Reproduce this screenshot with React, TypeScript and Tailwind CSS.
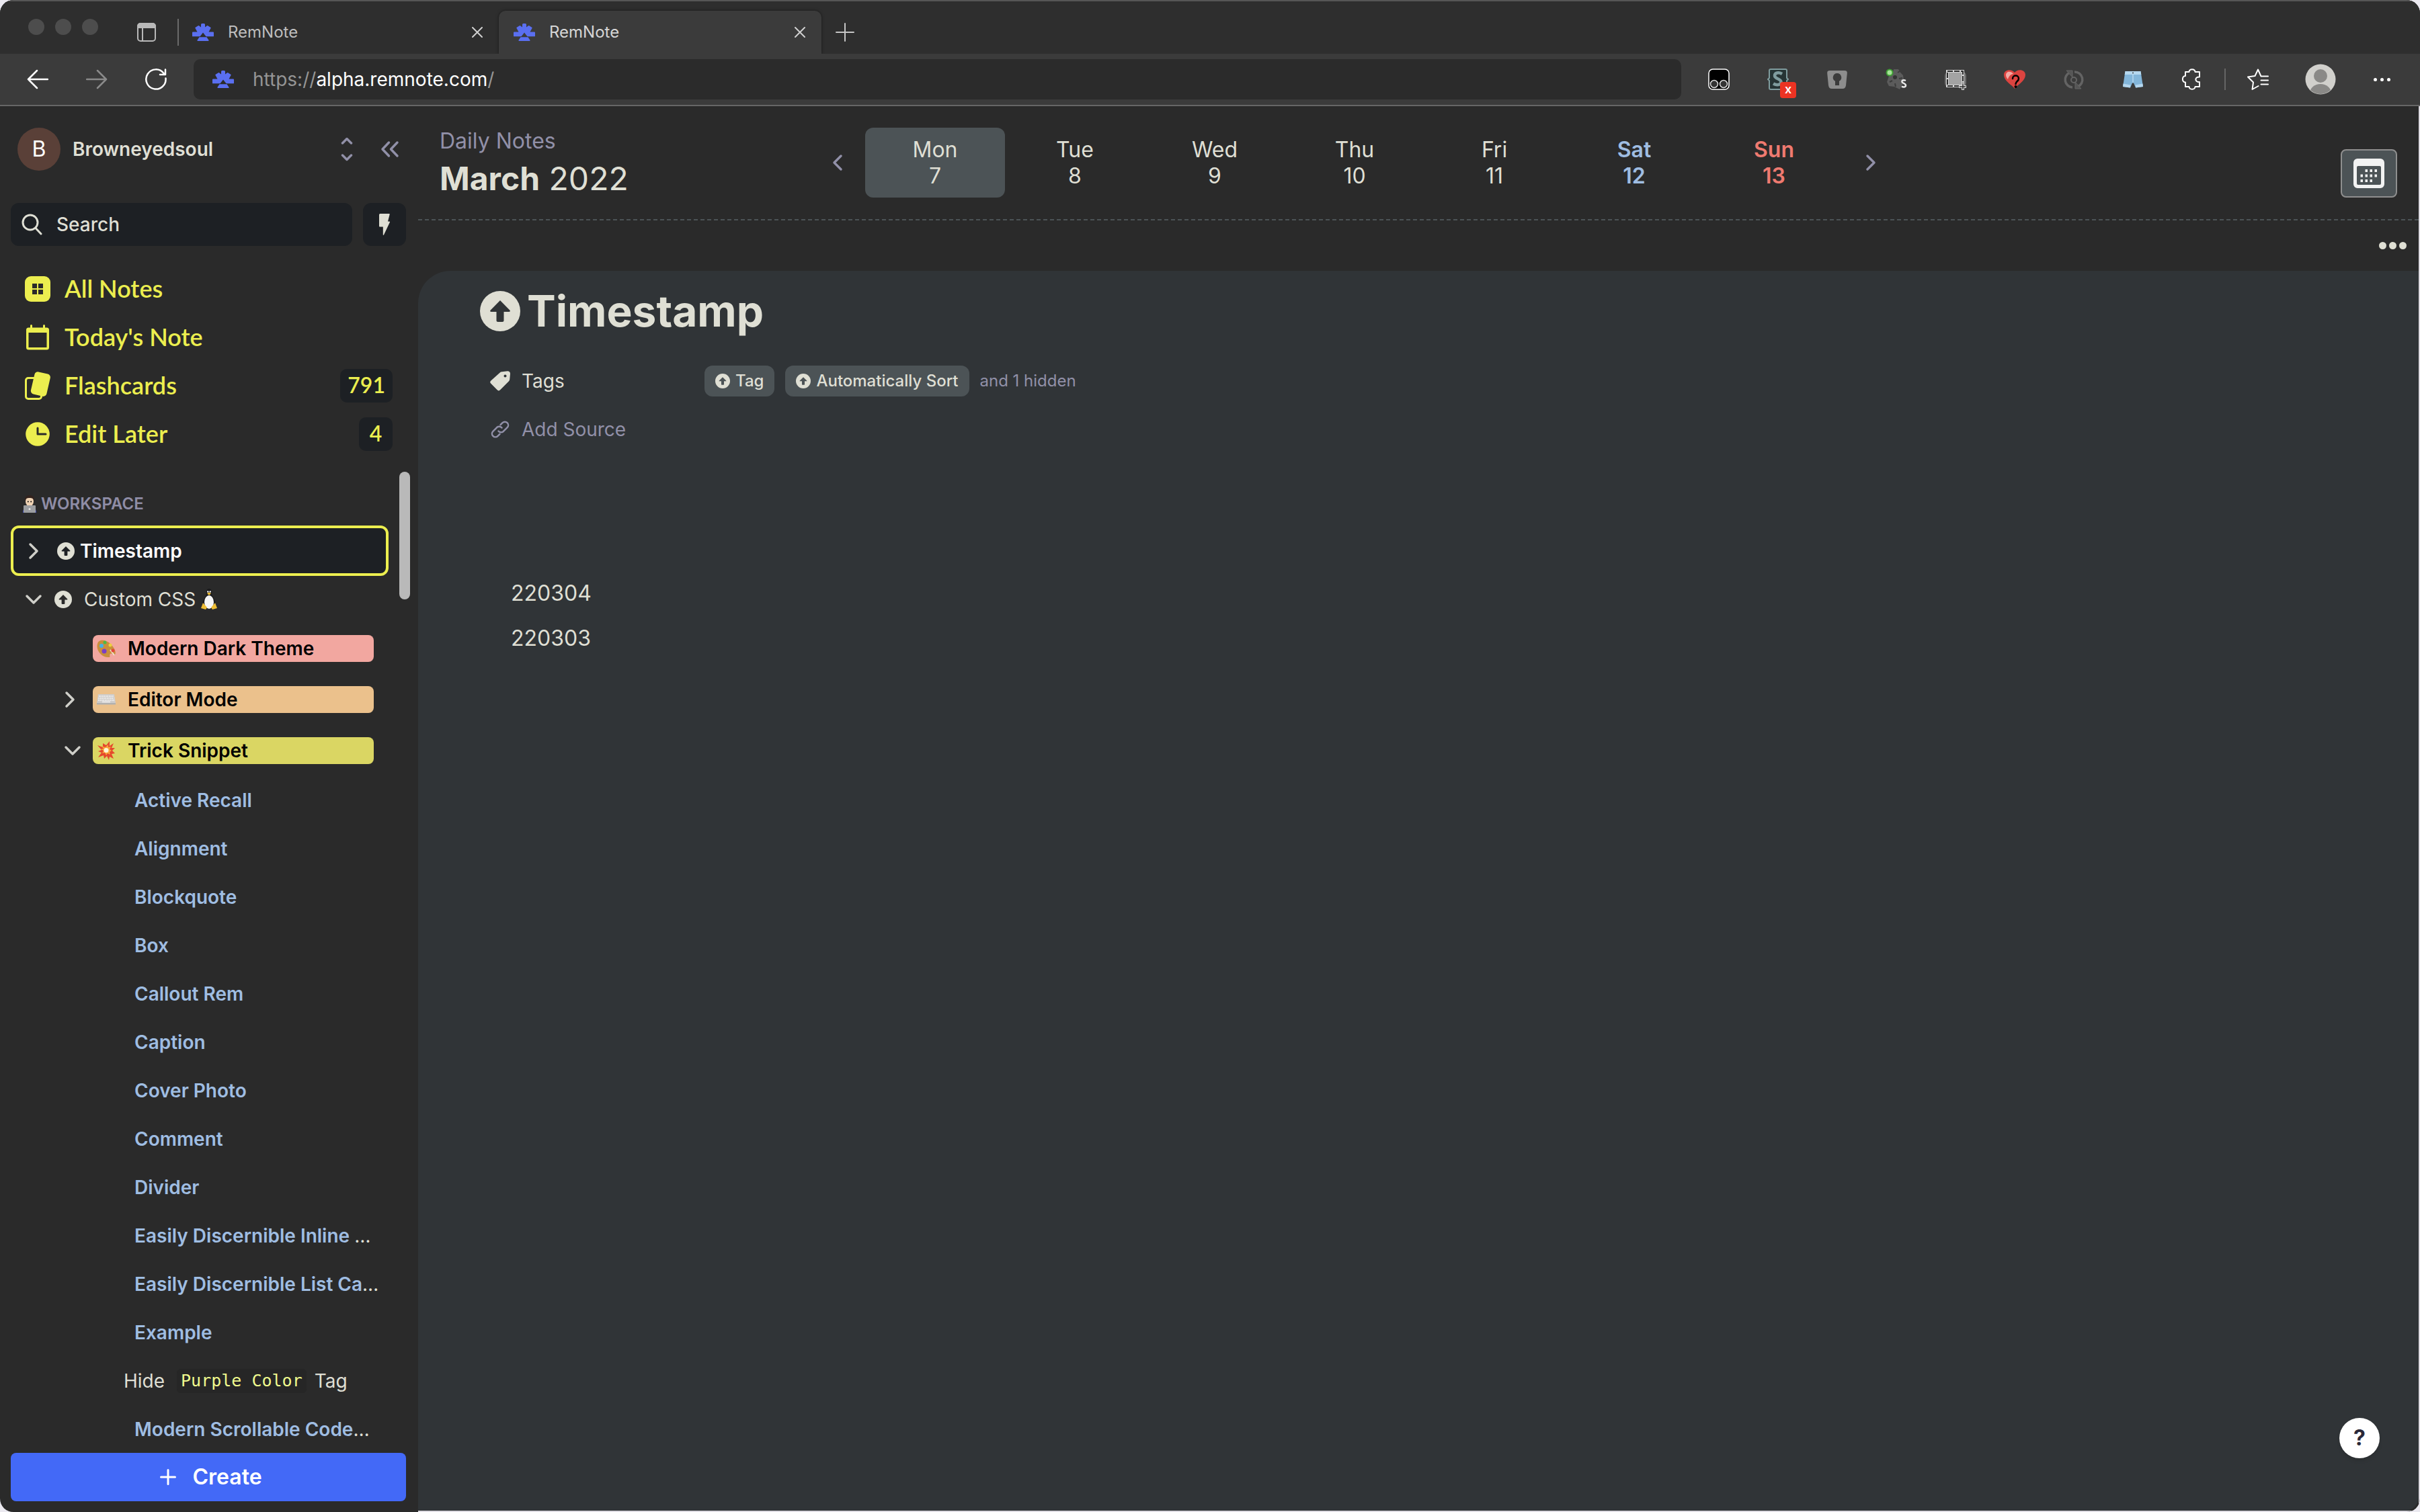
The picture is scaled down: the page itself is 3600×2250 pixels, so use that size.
import React from "react";

type IconProps = { className?: string };

function RemLogo({ className = "" }: IconProps) {
  return (
    <svg viewBox="0 0 32 26" className={`h-[26px] w-8 shrink-0 fill-[#5a6ff0] ${className}`} aria-hidden="true">
      <path d="M14.500 0h3a1.500 1.500 0 0 1 1.500 1.500V5.500l3-2.300a1 1 0 0 1 1.200 0l4 2.600a1 1 0 0 1 .3 1.200L24.500 12.500H31a1 1 0 0 1 1 1V18a1 1 0 0 1-1 1.200H20.500L16 13.500l-4.500 5.700H1A1 1 0 0 1 0 18v-4.500a1 1 0 0 1 1-1h6.500L4.500 7a1 1 0 0 1 .3-1.200l4-2.600a1 1 0 0 1 1.200 0l3 2.300V1.500A1.500 1.500 0 0 1 14.500 0z" />
      <path d="M10.500 20.200h11l3 4.600a.8.8 0 0 1-.7 1.200H8.200a.8.8 0 0 1-.7-1.200z" />
    </svg>
  );
}

function UpCircle({ className = "", arrow = "fill-[#2a2a2a]" }: IconProps & { arrow?: string }) {
  return (
    <svg viewBox="0 0 24 24" className={`shrink-0 ${className}`} aria-hidden="true">
      <circle cx="12" cy="12" r="12" className="fill-[#dfdfd4]" />
      <path
        d="M12 5.600 6.300 11.400c-.5.6-.2 1 .4 1h3.100v5.100c0 .6.300.9.9.9h2.600c.6 0 .9-.3.9-.9v-5.100h3.100c.6 0 .9-.4.4-1z"
        className={arrow}
      />
    </svg>
  );
}

function Chevron({ dir, className = "" }: IconProps & { dir: "left" | "right" | "down" }) {
  const d = { left: "M20 4 10 14l10 10", right: "M11 4l10 10-10 10", down: "M4 9l10 10L24 9" }[dir];
  return (
    <svg viewBox="0 0 28 28" className={`h-7 w-7 shrink-0 fill-none ${className}`} strokeWidth="3.500" strokeLinecap="round" strokeLinejoin="round" aria-hidden="true">
      <path d={d} />
    </svg>
  );
}

function CloseIcon() {
  return (
    <svg viewBox="0 0 16 16" className="h-4 w-4 stroke-[#d0d0d0]" strokeWidth="2" strokeLinecap="round" aria-hidden="true">
      <path d="M1 1l14 14M15 1 1 15" />
    </svg>
  );
}

function BrowserTab({ active = false }: { active?: boolean }) {
  return (
    <div
      className={
        active
          ? "flex h-16 w-[480px] items-center rounded-t-[10px] bg-[#3b3b3b] pr-6 pl-[22px] text-[#d6d6d6] shadow-[0_0_4px_rgba(0,0,0,0.5)]"
          : "flex h-16 w-[476px] items-center pr-6 pl-5 text-[#bdbdbd]"
      }
    >
      <button role="tab" aria-selected={active} className="flex flex-1 items-center gap-[21px] text-left text-[24px] leading-8">
        <RemLogo />
        RemNote
      </button>
      <button aria-label="Close tab">
        <CloseIcon />
      </button>
    </div>
  );
}

function TabStrip() {
  return (
    <div className="flex h-20 items-end border-t-2 border-[#565656] bg-[#2e2e2e]">
      <div className="flex h-16 items-center">
        <div className="flex gap-4 pb-4 pl-[42px]">
          <button aria-label="Close window" className="h-6 w-6 rounded-full bg-[#4d4d4d]" />
          <button aria-label="Minimize window" className="h-6 w-6 rounded-full bg-[#4d4d4d]" />
          <button aria-label="Zoom window" className="h-6 w-6 rounded-full bg-[#4d4d4d]" />
        </div>
        <button aria-label="Tab actions" className="ml-[58px]">
          <svg viewBox="0 0 28 28" className="h-7 w-7" aria-hidden="true">
            <rect x="1" y="1" width="26" height="26" rx="4" className="fill-none stroke-[#b9b9b9]" strokeWidth="2" />
            <path d="M0 5a5 5 0 0 1 5-5h18a5 5 0 0 1 5 5v3H0z" className="fill-[#b9b9b9]" />
            <path d="M8 8v19" className="stroke-[#b9b9b9]" strokeWidth="2" />
          </svg>
        </button>
        <div className="ml-8 h-10 w-[2px] bg-[#6a6a6a]" />
      </div>
      <div role="tablist" className="flex">
        <BrowserTab />
        <BrowserTab active />
      </div>
      <button aria-label="New tab" className="flex h-16 items-center pl-[21px]">
        <svg viewBox="0 0 28 28" className="h-7 w-7 stroke-[#c6c6c6]" strokeWidth="2" strokeLinecap="round" aria-hidden="true">
          <path d="M14 1v26M1 14h26" />
        </svg>
      </button>
    </div>
  );
}

function ExtensionButton({ label, children }: { label: string; children: React.ReactNode }) {
  return (
    <button aria-label={label} className="relative flex h-8 w-8 items-center justify-center">
      {children}
    </button>
  );
}

function Toolbar() {
  return (
    <div className="flex h-[78px] items-center border-b-2 border-[#666] bg-[#3b3b3b]">
      <div className="flex items-center gap-14 pl-10">
        <button aria-label="Back">
          <svg viewBox="0 0 32 32" className="h-8 w-8 fill-none stroke-white" strokeWidth="2.500" strokeLinecap="round" strokeLinejoin="round">
            <path d="M31 16H2M15 3 2 16l13 13" />
          </svg>
        </button>
        <button aria-label="Forward">
          <svg viewBox="0 0 32 32" className="h-8 w-8 fill-none stroke-[#8a8a8a]" strokeWidth="2.500" strokeLinecap="round" strokeLinejoin="round">
            <path d="M1 16h29M17 3l13 13-13 13" />
          </svg>
        </button>
        <button aria-label="Reload">
          <svg viewBox="0 0 32 32" className="h-8 w-8 fill-none stroke-white" strokeWidth="2.500" strokeLinecap="round" strokeLinejoin="round">
            <path d="M30.500 14.500A14.600 14.600 0 1 1 27.500 7M30 1.500V9h-8" />
          </svg>
        </button>
      </div>
      <div className="ml-10 flex h-[60px] flex-1 items-center gap-7 rounded-[10px] bg-[#2b2b2b] pl-7">
        <RemLogo />
        <div role="textbox" aria-label="Address" className="text-[28px] leading-9 text-[#959595]">
          https://<span className="text-white">alpha.remnote.com</span>/
        </div>
      </div>
      <div className="flex items-center gap-14 pl-10">
        <ExtensionButton label="Tampermonkey">
          <svg viewBox="0 0 32 32" className="h-8 w-8">
            <rect x="1" y="1" width="30" height="30" rx="6" className="fill-black stroke-white" strokeWidth="1.500" />
            <circle cx="9" cy="23" r="5.500" className="fill-[#333] stroke-[#ddd]" strokeWidth="1.500" />
            <circle cx="23" cy="23" r="5.500" className="fill-[#333] stroke-[#ddd]" strokeWidth="1.500" />
          </svg>
        </ExtensionButton>
        <ExtensionButton label="Stylus">
          <svg viewBox="0 0 32 32" className="h-8 w-8">
            <path d="M5 1h22a2 2 0 0 1 2 2v11l2 2-2 2v11a2 2 0 0 1-2 2H5a2 2 0 0 1-2-2V18l-2-2 2-2V3a2 2 0 0 1 2-2z" className="fill-[#263434] stroke-[#7f9c9e]" strokeWidth="2" />
            <path d="M22 8c-5-3-11-2-11 2.500 0 5.500 9.500 4 9.500 9.500 0 5-7 5-11.500 2.500" className="fill-none stroke-[#7f9c9e]" strokeWidth="4.500" />
          </svg>
          <span className="absolute top-5 left-[19px] flex h-6 w-6 items-center justify-center rounded-[4px] bg-[#ec3323] pb-[2px] text-[18px] leading-5 font-semibold text-white">x</span>
        </ExtensionButton>
        <ExtensionButton label="Password manager">
          <svg viewBox="0 0 32 32" className="h-8 w-8">
            <path d="M5 3h22c3 0 4 1.500 3.800 4L29 25c-.4 3-2 5-5 5H8c-3 0-4.600-2-5-5L1.200 7C1 4.500 2 3 5 3z" className="fill-[#8d8d8d]" />
            <path d="M16 7a6.300 6.300 0 0 0-3 11.800V25h6v-6.200A6.300 6.300 0 0 0 16 7z" className="fill-[#3b3b3b]" />
          </svg>
        </ExtensionButton>
        <ExtensionButton label="Cookie sessions">
          <svg viewBox="0 0 32 32" className="h-8 w-8">
            <path d="M12 1h7l3 5 4 4 1 7-1 5-5 9-8-4-8-1-3-6 3-9 5-2z" className="fill-[#5b5b5b]" />
            <circle cx="14" cy="13" r="3" className="fill-[#343434]" />
            <path d="M18 6l3-2M10 18l-4 2M20 15l5-1M14 22l1 5" className="stroke-[#3b3b3b]" strokeWidth="2" />
            <circle cx="6" cy="6" r="4.500" className="fill-[#a6e398] stroke-[#3f9e34]" strokeWidth="2" />
            <path d="M30 18c-3-1.500-6-.5-5.500 2 .5 2 5.500 2 5.500 5s-4 3-6 1.500" className="fill-none stroke-[#e8e8e8]" strokeWidth="2.500" />
          </svg>
        </ExtensionButton>
        <ExtensionButton label="Screenshot">
          <svg viewBox="0 0 32 32" className="h-8 w-8">
            <rect x="0" y="4" width="32" height="24" rx="7" className="fill-[#6f6f6f]" />
            <rect x="4" y="4" width="23" height="22" className="fill-[#a3a3a3] stroke-[#d4d4d4]" strokeWidth="4" />
            <rect x="4" y="4" width="23" height="22" className="fill-none stroke-[#2e2e2e]" strokeWidth="2" strokeDasharray="8 2" />
            <path d="M21 27h11M27 22v10" className="stroke-[#d4d4d4]" strokeWidth="4" />
            <path d="M22 27h9M27 23v8" className="stroke-[#2e2e2e]" strokeWidth="1.500" />
          </svg>
        </ExtensionButton>
        <ExtensionButton label="Saved hearts">
          <svg viewBox="0 0 32 32" className="h-8 w-8">
            <path d="M16 30C12 24 0 19 0 9.500 0 1 12 0 16 6c4-6 16-5 16 3.500C32 19 20 24 16 30z" className="fill-[#dc4440]" />
            <path d="M3 10c0-6 7-7 11-2-4 0-7 4-8 8-1-1-3-4-3-6z" className="fill-[#f3aaa6]" />
            <path d="M13 15c0-6 9-6 9 0 0 4-4.500 4-4.500 8" className="fill-none stroke-black" strokeWidth="2.500" strokeLinecap="round" />
            <circle cx="17.500" cy="27" r="2" />
          </svg>
        </ExtensionButton>
        <ExtensionButton label="Sync">
          <svg viewBox="0 0 32 32" className="h-8 w-8 fill-none stroke-[#646464]" strokeWidth="2">
            <path d="M10 6A11.500 11.500 0 0 0 14 28M22 27A11.500 11.500 0 0 0 17 5" strokeWidth="3.500" />
            <path d="M5 3h9v10zM27 30h-9V20z" className="fill-[#555]" strokeWidth="1" />
            <circle cx="16" cy="17" r="4" />
          </svg>
        </ExtensionButton>
        <ExtensionButton label="Clothing">
          <svg viewBox="0 0 32 32" className="h-8 w-8">
            <path d="M4.500 4h23L31 27l-11 1.500-3-7h-2l-3 7L1 27z" className="fill-[#83b6da]" />
            <path d="M4.500 4h23l.8 5H3.700zM1.500 22.500l11 2-.8 4L1 27zM30.500 22.500l-11 2 .8 4L31 27z" className="fill-[#b5d7ee]" />
            <path d="M16 9v12" className="stroke-[#a9cfea]" strokeWidth="2" />
            <circle cx="16" cy="6.500" r="1" className="fill-[#444]" />
          </svg>
        </ExtensionButton>
        <ExtensionButton label="Extensions">
          <svg viewBox="0 0 32 32" className="h-8 w-8 fill-none stroke-white" strokeWidth="2" strokeLinejoin="round">
            <path d="M6 5h5.500c.5-5 8.500-5 9 0H27v7.500c-7.500-.500-7.500 8 0 7.500V27h-6.500c-.5 5-8.500 5-9 0H6v-6.500c-5.500-.500-5.500-9 0-9.500z" />
          </svg>
        </ExtensionButton>
      </div>
      <div className="ml-8 h-8 w-[2px] bg-[#666]" />
      <div className="flex items-center pr-11 pl-8">
        <button aria-label="Favorites">
          <svg viewBox="0 0 32 32" className="h-8 w-8 fill-none stroke-white" strokeWidth="2" strokeLinecap="round" strokeLinejoin="round">
            <path d="M31 11.500H20.500L16 1.500l-4.500 9.500L1 12.500l8 8-1.500 10.500 9-5M20.500 17.500H31M20.500 23.500H31" />
          </svg>
        </button>
        <button aria-label="Profile" className="ml-[54px]">
          <svg viewBox="0 0 46 46" className="h-[46px] w-[46px]">
            <clipPath id="profile-clip">
              <circle cx="23" cy="23" r="22" />
            </clipPath>
            <circle cx="23" cy="23" r="22.500" className="fill-[#d1d0cc]" />
            <circle cx="23" cy="18" r="10" className="fill-[#8a8987]" />
            <ellipse cx="23" cy="44" rx="16" ry="14" className="fill-[#8a8987]" clipPath="url(#profile-clip)" />
          </svg>
        </button>
        <button aria-label="Settings and more" className="ml-14 flex gap-[5px]">
          <span className="h-[5px] w-[5px] rounded-full bg-white" />
          <span className="h-[5px] w-[5px] rounded-full bg-white" />
          <span className="h-[5px] w-[5px] rounded-full bg-white" />
        </button>
      </div>
    </div>
  );
}

function NavItem({ icon, label, count }: { icon: React.ReactNode; label: string; count?: string }) {
  return (
    <a href="#" className="flex h-[72px] items-center pr-[38px] pl-9 font-['Lato',sans-serif] text-[36px] leading-10 font-semibold text-[#ecee4f]">
      <span className="flex w-[60px] items-center">{icon}</span>
      <span className="flex-1 pb-[2px]">{label}</span>
      {count && (
        <span className="min-w-[50px] rounded-[10px] bg-[#1d2024] px-[11px] pt-1 pb-[6px] text-center text-[32px]">{count}</span>
      )}
    </a>
  );
}

function PaletteEmoji() {
  return (
    <svg viewBox="0 0 28 28" className="h-7 w-7 shrink-0" aria-hidden="true">
      <path d="M1 7C3-1 15 1 21 8c6 6 8 12 6 15-2 2-4-3-7-1-2 2 1 5-2 5C8 28-2 17 1 7z" className="fill-[#c98f3c]" />
      <path d="M20 16l6 8" className="stroke-[#f1e2cf]" strokeWidth="2" />
      <circle cx="7" cy="10" r="3" className="fill-[#45b1e8]" />
      <circle cx="12" cy="5" r="2.500" className="fill-[#4eb947]" />
      <circle cx="20" cy="9" r="2.500" className="fill-[#ecd13c]" />
      <circle cx="11" cy="18" r="3.500" className="fill-[#7b3fc4]" />
      <circle cx="24" cy="17" r="2.500" className="fill-[#e5443b]" />
    </svg>
  );
}

function KeyboardEmoji() {
  return (
    <svg viewBox="0 0 28 28" className="h-7 w-7 shrink-0" aria-hidden="true">
      <path d="M2 6h24l2 13H0z" className="fill-[#cfcdcb]" />
      <path d="M0 19h28v2.500H0z" className="fill-[#b3b1af]" />
      <path d="M3 9h22M2.500 12h23M2 15h24" className="stroke-[#f0efee]" strokeWidth="2" strokeDasharray="1.500 1" />
      <path d="M8 17.500h12" className="stroke-[#f0efee]" strokeWidth="1.500" />
    </svg>
  );
}

function BoomEmoji() {
  return (
    <svg viewBox="0 0 28 28" className="h-7 w-7 shrink-0" aria-hidden="true">
      <path d="M14 6l5-6 0 7 6-4-3 7 5 0-4 4 4 4-5 1 3 7-6-3-1 5-3-6-4 4-1-5-8 3 5-7-5-2 5-2-6-7 8 3 0-6z" className="fill-[#e5492c]" />
      <path d="M14 8l3-3 0 4 4-1-2 4 3 2-3 2 1 4-4-2-2 3-2-4-4 1 2-4-4-2 4-1-3-4 5 2z" className="fill-[#f9a63b]" />
      <circle cx="14" cy="13.500" r="3.500" className="fill-[#fff6d8]" />
    </svg>
  );
}

function PenguinEmoji() {
  return (
    <svg viewBox="0 0 24 32" className="h-8 w-6 shrink-0" aria-hidden="true">
      <path d="M12 0c4 0 4 5 4 8s6 9 6 15-4 7-10 7S2 29 2 23 8 11 8 8s0-8 4-8z" className="fill-[#1b1b1d]" />
      <ellipse cx="12" cy="20" rx="7" ry="10" className="fill-[#f6f6f6]" />
      <circle cx="10.300" cy="4.500" r="1.200" className="fill-white" />
      <circle cx="13.700" cy="4.500" r="1.200" className="fill-white" />
      <path d="M9 7l3-1.500L15 7l-3 3z" className="fill-[#eebd35]" />
      <path d="M3 21l6 7-2 3-7-2zM21 21l-6 7 2 3 7-2z" className="fill-[#eebd35]" />
    </svg>
  );
}

function TechnologistEmoji() {
  return (
    <svg viewBox="0 0 22 26" className="h-[26px] w-[22px] shrink-0" aria-hidden="true">
      <path d="M1 26c0-7 4-9 10-9s10 2 10 9z" className="fill-[#3b49b5]" />
      <ellipse cx="11" cy="9" rx="6" ry="7.500" className="fill-[#f0d3b4]" />
      <path d="M4 9C3 2 7 0 11 0s8 2 7 9c-1-4-3-5-7-5S5 5 4 9z" className="fill-[#33231e]" />
      <circle cx="8.800" cy="9.500" r="1" />
      <circle cx="13.200" cy="9.500" r="1" />
      <rect x="2" y="15" width="18" height="11" rx="1" className="fill-[#9c9ea1]" />
      <circle cx="11" cy="20.500" r="1.500" className="fill-[#e4e4e4]" />
    </svg>
  );
}

function ColoredRow({ label, tint, icon, chevron }: { label: string; tint: string; icon: React.ReactNode; chevron?: "right" | "down" }) {
  return (
    <li className="flex h-[76px] items-center pr-[66px] pl-[88px]">
      <button aria-label={`Toggle ${label}`} className="w-[50px]">
        {chevron === "right" && <Chevron dir="right" className="stroke-[#cfcfc9]" />}
        {chevron === "down" && <Chevron dir="down" className="ml-[6px] stroke-[#cfcfc9]" />}
      </button>
      <a href="#" className={`flex h-10 flex-1 items-center gap-[18px] rounded-lg pl-[6px] text-[28px] leading-9 font-semibold text-black ${tint}`}>
        {icon}
        {label}
      </a>
    </li>
  );
}

const snippets: { name: string; cut?: boolean }[] = [
  { name: "Active Recall" },
  { name: "Alignment" },
  { name: "Blockquote" },
  { name: "Box" },
  { name: "Callout Rem" },
  { name: "Caption" },
  { name: "Cover Photo" },
  { name: "Comment" },
  { name: "Divider" },
  { name: "Easily Discernible Inline ", cut: true },
  { name: "Easily Discernible List Ca", cut: true },
  { name: "Example" },
];

function SnippetRow({ name, cut }: { name: string; cut?: boolean }) {
  return (
    <li className="flex h-[72px] items-center pl-[200px] text-[28px] leading-9 font-semibold whitespace-pre text-[#9fbde2]">
      <a href="#">
        {name}
        {cut && <span className="font-normal text-[#dfdfd4]">…</span>}
      </a>
    </li>
  );
}

function Sidebar() {
  return (
    <aside className="flex w-[622px] shrink-0 flex-col pt-8">
      <div className="flex items-center pr-7 pl-[26px]">
        <span className="flex h-16 w-16 items-center justify-center rounded-full bg-[#5a4038] text-[32px] text-white">B</span>
        <span className="ml-[18px] flex-1 text-[28px] leading-9 font-semibold text-[#dfdfd4]">Browneyedsoul</span>
        <button aria-label="Switch knowledge base">
          <svg viewBox="0 0 20 36" className="h-9 w-5 fill-none stroke-[#9190a8]" strokeWidth="3.500" strokeLinecap="round" strokeLinejoin="round">
            <path d="M3.500 9 10 2.500 16.500 9M3.500 27l6.500 6.500 6.500-6.500" />
          </svg>
        </button>
        <button aria-label="Collapse sidebar" className="ml-10">
          <svg viewBox="0 0 28 28" className="h-7 w-7 fill-none stroke-[#9190a8]" strokeWidth="3.500" strokeLinecap="round" strokeLinejoin="round">
            <path d="M12.500 4 3 14l9.500 10M25 4l-9.500 10L25 24" />
          </svg>
        </button>
      </div>

      <div className="mt-12 flex gap-4 pr-[18px] pl-4">
        <label className="flex h-16 flex-1 items-center gap-5 rounded-xl bg-[#1d2024] pl-4">
          <svg viewBox="0 0 32 32" className="h-8 w-8 shrink-0 fill-none stroke-[#dfdfd4]" strokeWidth="3" strokeLinecap="round" aria-hidden="true">
            <circle cx="13" cy="13" r="11" />
            <path d="M21 21.500 29 30" />
          </svg>
          <input
            aria-label="Search"
            placeholder="Search"
            className="w-full bg-transparent text-[28px] leading-9 font-medium outline-none placeholder:text-[#dfdfd4] placeholder:opacity-100"
          />
        </label>
        <button aria-label="Quick actions" className="flex h-16 w-16 items-center justify-center rounded-xl bg-[#1d2024]">
          <svg viewBox="0 0 16 32" className="h-8 w-4 fill-[#dfdfd4]">
            <path d="M1.500 0H15a.8.8 0 0 1 .7 1L13 11.500h2a.9.9 0 0 1 .9 1.200L7 31.500c-.4.700-1.200.4-1.200-.3V19.500H1A1 1 0 0 1 0 18.500V1.500A1.500 1.500 0 0 1 1.500 0z" />
          </svg>
        </button>
      </div>

      <nav className="mt-7">
        <NavItem
          label="All Notes"
          icon={
            <svg viewBox="0 0 40 40" className="h-10 w-10">
              <rect x="1" y="1" width="38" height="38" rx="9" className="fill-[#ecee4f]" />
              <path d="M12 12h7v7h-7zM21 12h7v7h-7zM12 21h7v7h-7zM21 21h7v7h-7z" className="fill-[#2a2a2a]" />
            </svg>
          }
        />
        <NavItem
          label="Today's Note"
          icon={
            <svg viewBox="0 0 40 40" className="h-10 w-10">
              <path d="M6.500 5.500H9V2.500a1.500 1.500 0 0 1 3 0v3h16v-3a1.500 1.500 0 0 1 3 0v3h2.500A3.500 3.500 0 0 1 37 9v26a3.500 3.500 0 0 1-3.500 3.500h-27A3.500 3.500 0 0 1 3 35V9a3.500 3.500 0 0 1 3.500-3.500zM6.500 13v22h27V13z" className="fill-[#ecee4f]" />
            </svg>
          }
        />
        <NavItem
          label="Flashcards"
          count="791"
          icon={
            <svg viewBox="0 0 40 42" className="h-[42px] w-10">
              <rect x="2.500" y="9.500" width="23" height="31" rx="3.500" className="fill-none stroke-[#ecee4f]" strokeWidth="3" />
              <rect x="12.500" y="1.500" width="24" height="34" rx="5" transform="rotate(13 24 18)" className="fill-[#ecee4f]" />
            </svg>
          }
        />
        <NavItem
          label="Edit Later"
          count="4"
          icon={
            <svg viewBox="0 0 40 40" className="h-10 w-10">
              <circle cx="20" cy="20" r="17.800" className="fill-[#ecee4f]" />
              <path d="M20 11v9h12" className="fill-none stroke-[#2a2a2a]" strokeWidth="3" strokeLinecap="round" strokeLinejoin="round" />
            </svg>
          }
        />
      </nav>

      <div className="relative mt-5 min-h-0 flex-1 overflow-hidden pt-[30px]">
        <div className="absolute top-0 right-3 h-[190px] w-4 rounded-full bg-[#b9b9b9]" />
        <h2 className="flex h-9 items-center gap-[6px] pl-[33px] text-[24px] leading-9 font-semibold text-[#8f8da6]">
          <TechnologistEmoji />
          WORKSPACE
        </h2>
        <ul className="mt-[14px]">
          <li className="mr-11 ml-4 flex h-[75px] items-center rounded-xl border-4 border-[#ecee4f] bg-[#1d2024]">
            <button aria-label="Expand Timestamp" className="ml-[14px]">
              <Chevron dir="right" className="stroke-[#cfcfc9]" />
            </button>
            <a href="#" className="ml-[23px] flex items-center gap-2 text-[28px] leading-9 font-semibold text-white">
              <UpCircle className="h-[26px] w-[26px]" arrow="fill-[#1d2024]" />
              Timestamp
            </a>
          </li>
          <li className="flex h-[70px] items-center pl-9">
            <button aria-label="Collapse Custom CSS">
              <Chevron dir="down" className="stroke-[#cfcfc9]" />
            </button>
            <a href="#" className="ml-[17px] flex items-center text-[28px] leading-9 text-[#dfdfd4]">
              <UpCircle className="mr-[18px] h-[26px] w-[26px]" />
              Custom CSS
              <span className="ml-2">
                <PenguinEmoji />
              </span>
            </a>
          </li>
          <ColoredRow label="Modern Dark Theme" tint="bg-[#f2a7a0]" icon={<PaletteEmoji />} />
          <ColoredRow label="Editor Mode" tint="bg-[#ebc18c]" icon={<KeyboardEmoji />} chevron="right" />
          <ColoredRow label="Trick Snippet" tint="bg-[#dad663]" icon={<BoomEmoji />} chevron="down" />
          {snippets.map((s) => (
            <SnippetRow key={s.name} {...s} />
          ))}
          <li className="flex h-[72px] items-center pl-[184px] text-[28px] leading-9 text-[#dfdfd4]">
            <a href="#" className="flex items-center">
              Hide
              <code className="mr-3 ml-[18px] rounded-md bg-[#262626] px-[6px] font-['DejaVu_Sans_Mono',monospace] text-[25px] leading-9 text-[#f0fa8e]">
                Purple Color
              </code>
              Tag
            </a>
          </li>
          <SnippetRow name="Modern Scrollable Code" cut />
        </ul>
      </div>

      <div className="pr-[18px] pb-4 pl-4">
        <button className="flex h-[72px] w-full items-center justify-center gap-6 rounded-lg bg-[#4369f7] pl-2 text-[32px] leading-10 font-semibold text-white">
          <svg viewBox="0 0 24 24" className="h-6 w-6 stroke-white" strokeWidth="3" strokeLinecap="round" aria-hidden="true">
            <path d="M12 1.500v21M1.500 12h21" />
          </svg>
          Create
        </button>
      </div>
    </aside>
  );
}

const week = [
  { day: "Mon", date: "7", tone: "bg-[#4c5356] text-[#dfdfd4]" },
  { day: "Tue", date: "8", tone: "text-[#dfdfd4]" },
  { day: "Wed", date: "9", tone: "text-[#dfdfd4]" },
  { day: "Thu", date: "10", tone: "text-[#dfdfd4]" },
  { day: "Fri", date: "11", tone: "text-[#dfdfd4]" },
  { day: "Sat", date: "12", tone: "font-semibold text-[#9fbde2]" },
  { day: "Sun", date: "13", tone: "font-semibold text-[#ef7a70]" },
];

function DailyHeader() {
  return (
    <header className="flex h-[170px] items-start border-b-2 border-dashed border-[#4c5356] pr-8 pl-8">
      <div className="w-[577px] pt-8">
        <p className="text-[32px] leading-10 text-[#9190a8]">Daily Notes</p>
        <h1 className="mt-[6px] text-[48px] leading-[60px] text-[#dfdfd4]">
          <b className="font-bold">March</b> 2022
        </h1>
      </div>
      <button aria-label="Previous week" className="mt-[70px]">
        <Chevron dir="left" className="stroke-[#9190a8]" />
      </button>
      <div className="mt-8 ml-7 flex">
        {week.map((d) => (
          <button key={d.date} className={`flex h-[104px] w-[208px] flex-col items-center justify-center rounded-xl text-[32px] leading-[39px] ${d.tone}`}>
            <span>{d.day}</span>
            <span>{d.date}</span>
          </button>
        ))}
      </div>
      <button aria-label="Next week" className="mt-[70px] ml-6">
        <Chevron dir="right" className="stroke-[#9190a8]" />
      </button>
      <button aria-label="Open calendar" className="mt-16 ml-auto flex h-[72px] w-[84px] items-center justify-center rounded-lg border-2 border-[#8f8f8f] bg-[#4c5356]">
        <svg viewBox="0 0 46 44" className="h-11 w-[46px]">
          <path d="M6 0h34a6 6 0 0 1 6 6v32a6 6 0 0 1-6 6H6a6 6 0 0 1-6-6V6a6 6 0 0 1 6-6zM5 13v24a2 2 0 0 0 2 2h32a2 2 0 0 0 2-2V13a2 2 0 0 0-2-2H7a2 2 0 0 0-2 2z" className="fill-[#f2f2f2]" />
          <path d="M17.500 16h3.500v4h-3.500zM24.500 16H28v4h-3.500zM31.500 16H35v4h-3.500zM10.500 23.500H14v4h-3.500zM17.500 23.500H21v4h-3.500zM24.500 23.500H28v4h-3.500zM31.500 23.500H35v4h-3.500zM10.500 31H14v4h-3.500zM17.500 31H21v4h-3.500zM24.500 31H28v4h-3.500z" className="fill-[#f2f2f2]" />
        </svg>
      </button>
    </header>
  );
}

function TagChip({ label }: { label: string }) {
  return (
    <a href="#" className="flex h-[46px] items-center gap-2 rounded-xl bg-[#4c5356] px-4 text-[24px] leading-8 font-medium text-[#dfdfd4]">
      <UpCircle className="h-[22px] w-[22px]" arrow="fill-[#4c5356]" />
      {label}
    </a>
  );
}

function DocumentPane() {
  return (
    <section className="flex flex-1 flex-col rounded-tl-[48px] rounded-br-[20px] bg-[#303437] text-[#dfdfd4]">
      <h2 className="flex items-center gap-[10px] pt-5 pl-[92px] text-[64px] leading-[80px] font-bold">
        <UpCircle className="h-[60px] w-[60px]" arrow="fill-[#303437]" />
        Timestamp
      </h2>
      <div className="mt-7 flex h-[72px] items-center pl-[106px] text-[28px] leading-9">
        <svg viewBox="0 0 32 32" className="h-8 w-8 shrink-0" aria-hidden="true">
          <path d="M18.500 2.200 27 1.300a4 4 0 0 1 4 3.700l-.8 8.800a4 4 0 0 1-1.200 2.500L16 29.300a3 3 0 0 1-4.300 0L2.300 19.800a3 3 0 0 1 0-4.300L15.700 3.400a4 4 0 0 1 2.800-1.200z" className="fill-[#dfdfd4]" />
          <circle cx="23.500" cy="8.500" r="2" className="fill-[#303437]" />
        </svg>
        <span className="ml-4 w-[272px]">Tags</span>
        <div className="flex items-center gap-4">
          <TagChip label="Tag" />
          <TagChip label="Automatically Sort" />
          <a href="#" className="text-[24px] leading-8 text-[#9190a8]">
            and 1 hidden
          </a>
        </div>
      </div>
      <button className="flex h-[72px] items-center gap-4 pl-[106px] text-left text-[28px] leading-9 text-[#9190a8]">
        <svg viewBox="0 0 32 32" className="h-8 w-8 fill-none stroke-[#9190a8]" strokeWidth="2.500" strokeLinecap="round" strokeLinejoin="round" aria-hidden="true">
          <path d="M13.500 18.500a5 5 0 0 0 7.100.7l6-6a5 5 0 0 0-7.100-7.100l-3 3M18.500 13.500a5 5 0 0 0-7.100-.7l-6 6a5 5 0 0 0 7.100 7.100l3-3" />
        </svg>
        Add Source
      </button>
      <ul className="mt-[174px] pl-[138px] text-[32px] leading-[67px]">
        <li>220304</li>
        <li>220303</li>
      </ul>
      <button aria-label="Help" className="mt-auto mr-[58px] mb-[78px] flex h-[60px] w-[60px] items-center justify-center self-end rounded-full bg-white text-[32px] leading-10 font-bold text-[#2a2838] shadow-md">
        ?
      </button>
    </section>
  );
}

export default function App() {
  return (
    <div className="h-screen bg-[#ebe9f0] font-['Inter',sans-serif]">
      <div className="flex h-full flex-col overflow-hidden rounded-[20px] bg-[#2a2a2a]">
        <TabStrip />
        <Toolbar />
        <div className="flex min-h-0 flex-1">
          <Sidebar />
          <main className="flex min-w-0 flex-1 flex-col border-r-2 border-b-2 border-[#dddbe2]">
            <DailyHeader />
            <div className="flex h-[75px] items-center justify-end pr-[18px]">
              <button aria-label="More options" className="flex gap-1">
                <span className="h-[11px] w-[11px] rounded-full bg-[#dfdfd4]" />
                <span className="h-[11px] w-[11px] rounded-full bg-[#dfdfd4]" />
                <span className="h-[11px] w-[11px] rounded-full bg-[#dfdfd4]" />
              </button>
            </div>
            <DocumentPane />
          </main>
        </div>
      </div>
    </div>
  );
}
